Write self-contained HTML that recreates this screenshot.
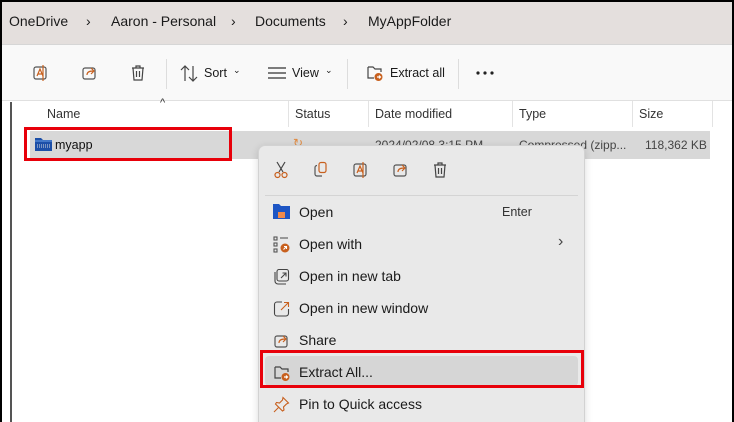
<!DOCTYPE html>
<html><head><style>
*{margin:0;padding:0;box-sizing:border-box}
body{width:734px;height:422px;overflow:hidden;font-family:"Liberation Sans",sans-serif;background:#000;position:relative}
.frame{position:absolute;left:2px;top:2px;width:730px;height:420px;background:#fff;overflow:hidden}
.crumb{position:absolute;left:0;top:0;width:730px;height:42px;background:#e4dfdd;font-size:14px;color:#1a1a1a}
.crumb span{position:absolute;top:11px}
.tool{position:absolute;left:0;top:42px;width:730px;height:57px;background:#f9f9f9;border-top:1px solid #d6d6d6;border-bottom:1px solid #e0e0e0;font-size:12.5px;color:#1a1a1a}
.tool span{position:absolute}
.sep{position:absolute;top:14px;width:1px;height:30px;background:#ddd}
.hdr{position:absolute;top:99px;height:28px;font-size:12.5px;color:#333}
.hdr span{position:absolute;top:6px}
.col{position:absolute;top:0;width:1px;height:26px;background:#e3e3e3}
.abs{position:absolute}
.menu{position:absolute;left:256px;top:143px;width:327px;height:290px;background:#e9e9e9;border:1px solid #d2d2d2;border-radius:7px;box-shadow:0 2px 8px rgba(0,0,0,.15)}
.mi{position:absolute;left:40px;font-size:14px;color:#1a1a1a}
.red{position:absolute;border:3px solid #e8000a}
</style></head><body>
<div class="frame">
<div class="crumb">
<span style="left:7px">OneDrive</span><span style="left:84px">›</span>
<span style="left:109px">Aaron - Personal</span><span style="left:229px">›</span>
<span style="left:253px">Documents</span><span style="left:341px">›</span>
<span style="left:366px">MyAppFolder</span>
</div>
<div class="tool">
<svg class="abs" style="left:30px;top:19px" width="18" height="18" viewBox="0 0 18 18" fill="none" stroke="#555" stroke-width="1.2"><rect x="2" y="3" width="12" height="12" rx="2"/><path d="M5 12l3-7 3 7M6 10h4" stroke="#c8601e"/><path d="M11 1v16" stroke="#c8601e"/></svg>
<svg class="abs" style="left:79px;top:19px" width="18" height="18" viewBox="0 0 18 18" fill="none" stroke="#555" stroke-width="1.2"><rect x="2" y="4" width="12" height="11" rx="2"/><path d="M6 11c0-3 3-4 6-4M10 4l3 3-3 3" stroke="#c8601e"/></svg>
<svg class="abs" style="left:128px;top:19px" width="16" height="18" viewBox="0 0 16 18" fill="none" stroke="#444" stroke-width="1.2"><path d="M2 4h12M6 4V2h4v2M3 4l1 12h8l1-12M6.5 7v6M9.5 7v6"/></svg>
<div class="sep" style="left:164px"></div>
<svg class="abs" style="left:178px;top:20px" width="18" height="17" viewBox="0 0 18 17" fill="none" stroke="#444" stroke-width="1.2"><path d="M5 16V1M1 5l4-4 4 4M13 1v15M9 12l4 4 4-4"/></svg>
<span style="left:202px;top:21px">Sort</span><span style="left:231px;top:20px;font-size:9px">⌄</span>
<svg class="abs" style="left:266px;top:22px" width="18" height="12" viewBox="0 0 18 12" stroke="#333" stroke-width="1.2"><path d="M0 1h18M0 6h18M0 11h18"/></svg>
<span style="left:290px;top:21px">View</span><span style="left:323px;top:20px;font-size:9px">⌄</span>
<div class="sep" style="left:345px"></div>
<svg class="abs" style="left:364px;top:19px" width="18" height="18" viewBox="0 0 18 18" fill="none" stroke="#444" stroke-width="1.2"><path d="M2 3h5l2 2h6v3M2 3v11h6"/><circle cx="12.5" cy="13" r="4" fill="#c8601e" stroke="none"/><path d="M11 13h3M13 11.5l1.5 1.5-1.5 1.5" stroke="#fff"/></svg>
<span style="left:388px;top:21px">Extract all</span>
<div class="sep" style="left:456px"></div>
<svg class="abs" style="left:474px;top:26px" width="18" height="4" viewBox="0 0 18 4" fill="#222"><circle cx="2" cy="2" r="1.6"/><circle cx="9" cy="2" r="1.6"/><circle cx="16" cy="2" r="1.6"/></svg>
</div>
<div class="abs" style="left:8px;top:100px;width:2px;height:320px;background:#555"></div>
<div class="hdr" style="left:0;width:730px">
<span style="left:158px;top:-4px;font-size:11px">^</span>
<span style="left:45px">Name</span>
<div class="col" style="left:286px"></div><span style="left:293px">Status</span>
<div class="col" style="left:366px"></div><span style="left:373px">Date modified</span>
<div class="col" style="left:510px"></div><span style="left:517px">Type</span>
<div class="col" style="left:630px"></div><span style="left:637px">Size</span>
<div class="col" style="left:710px"></div>
</div>
<div class="abs" style="left:28px;top:129px;width:680px;height:28px;background:#d8d8d8"></div>
<svg class="abs" style="left:33px;top:135px" width="17" height="14" viewBox="0 0 17 14"><path d="M0 1h6l2 2h9v11H0z" fill="#1c4fa8"/><path d="M0 4h17" stroke="#6aa0e8"/><path d="M2 8h14M2 10h14" stroke="#ddd" stroke-dasharray="1 1"/></svg>
<span class="abs" style="left:53px;top:136px;font-size:12.5px;color:#111">myapp</span>
<span class="abs" style="left:291px;top:134px;font-size:12px;color:#e08a40">↻</span>
<span class="abs" style="left:373px;top:136px;font-size:12px;color:#444">2024/02/08 3:15 PM</span>
<span class="abs" style="left:517px;top:136px;font-size:12px;color:#444">Compressed (zipp...</span>
<span class="abs" style="left:643px;top:136px;font-size:12px;color:#444">118,362 KB</span>
<div class="red" style="left:22px;top:125px;width:208px;height:34px"></div>
<div class="menu">
<svg class="abs" style="left:14px;top:15px" width="16" height="18" viewBox="0 0 16 18" fill="none" stroke-width="1.2"><path d="M4 1l6 10M12 1L6 11" stroke="#444"/><circle cx="4.5" cy="14" r="2.5" stroke="#c8601e"/><circle cx="11.5" cy="14" r="2.5" stroke="#c8601e"/></svg>
<svg class="abs" style="left:54px;top:15px" width="16" height="17" viewBox="0 0 16 17" fill="none" stroke="#c8601e" stroke-width="1.2"><rect x="6" y="1.5" width="7" height="10" rx="2"/><path d="M4 4.5a2 2 0 0 0-2 2V13a2 2 0 0 0 2 2h5" stroke="#555"/></svg>
<svg class="abs" style="left:93px;top:15px" width="18" height="18" viewBox="0 0 18 18" fill="none" stroke="#555" stroke-width="1.2"><rect x="2" y="3" width="12" height="12" rx="2"/><path d="M5 12l3-7 3 7M6 10h4" stroke="#c8601e"/><path d="M11 1v16" stroke="#c8601e"/></svg>
<svg class="abs" style="left:133px;top:15px" width="18" height="18" viewBox="0 0 18 18" fill="none" stroke="#555" stroke-width="1.2"><rect x="2" y="4" width="12" height="11" rx="2"/><path d="M6 11c0-3 3-4 6-4M10 4l3 3-3 3" stroke="#c8601e"/></svg>
<svg class="abs" style="left:173px;top:15px" width="16" height="18" viewBox="0 0 16 18" fill="none" stroke="#444" stroke-width="1.2"><path d="M2 4h12M6 4V2h4v2M3 4l1 12h8l1-12M6.5 7v6M9.5 7v6"/></svg>
<div class="abs" style="left:6px;top:49px;width:313px;height:1px;background:#d4d4d4"></div>
<svg class="abs" style="left:14px;top:58px" width="17" height="15" viewBox="0 0 17 15"><path d="M0 0h6l2 2h9v13H0z" fill="#1d55c4"/><rect x="5" y="8" width="7" height="6" fill="#f08a4b"/></svg>
<span class="mi" style="top:58px">Open</span><span class="abs" style="left:243px;top:59px;font-size:12.5px;color:#333">Enter</span>
<svg class="abs" style="left:14px;top:90px" width="17" height="17" viewBox="0 0 17 17" fill="none" stroke="#555" stroke-width="1.1"><rect x="1" y="1" width="3" height="3"/><rect x="1" y="7" width="3" height="3"/><rect x="1" y="13" width="3" height="3"/><path d="M7 2h8"/><circle cx="12" cy="12" r="4.5" fill="#c8601e" stroke="none"/><path d="M10.5 13.5l3-3M11 10.5h2.5V13" stroke="#fff"/></svg>
<span class="mi" style="top:90px">Open with</span><span class="abs" style="left:299px;top:87px;font-size:16px;color:#444">›</span>
<svg class="abs" style="left:14px;top:122px" width="17" height="17" viewBox="0 0 17 17" fill="none" stroke="#444" stroke-width="1.1"><rect x="4" y="1.5" width="11.5" height="11.5" rx="2"/><path d="M2 4v9a3 3 0 0 0 3 3h8"/><path d="M8 10l5-5M9.5 5H13v3.5"/></svg>
<span class="mi" style="top:122px">Open in new tab</span>
<svg class="abs" style="left:14px;top:154px" width="17" height="17" viewBox="0 0 17 17" fill="none" stroke="#444" stroke-width="1.1"><path d="M9 2H4a2.5 2.5 0 0 0-2.5 2.5v9A2.5 2.5 0 0 0 4 16h9a2.5 2.5 0 0 0 2.5-2.5V9"/><path d="M8 10l7-7M11 2.5h4.5V7" stroke="#c8601e"/></svg>
<span class="mi" style="top:154px">Open in new window</span>
<svg class="abs" style="left:14px;top:186px" width="18" height="18" viewBox="0 0 18 18" fill="none" stroke="#555" stroke-width="1.2"><rect x="2" y="4" width="12" height="11" rx="2"/><path d="M6 11c0-3 3-4 6-4M10 4l3 3-3 3" stroke="#c8601e"/></svg>
<span class="mi" style="top:186px">Share</span>
<div class="abs" style="left:6px;top:210px;width:313px;height:30px;background:#d6d6d6;border-radius:4px"></div>
<svg class="abs" style="left:14px;top:218px" width="18" height="18" viewBox="0 0 18 18" fill="none" stroke="#444" stroke-width="1.2"><path d="M2 3h5l2 2h6v3M2 3v11h6"/><circle cx="12.5" cy="13" r="4" fill="#c8601e" stroke="none"/><path d="M11 13h3M13 11.5l1.5 1.5-1.5 1.5" stroke="#fff"/></svg>
<span class="mi" style="top:218px">Extract All...</span>
<svg class="abs" style="left:14px;top:250px" width="17" height="17" viewBox="0 0 17 17" fill="none" stroke="#c8601e" stroke-width="1.1"><path d="M10 1.5l5.5 5.5-2 1-3 3 .5 3-1.5 1-7-7 1-1.5 3 .5 3-3z"/><path d="M5.5 11.5L1 16"/></svg>
<span class="mi" style="top:250px">Pin to Quick access</span>
</div>
<div class="red" style="left:258px;top:348px;width:324px;height:38px"></div>
</div>
</body></html>
